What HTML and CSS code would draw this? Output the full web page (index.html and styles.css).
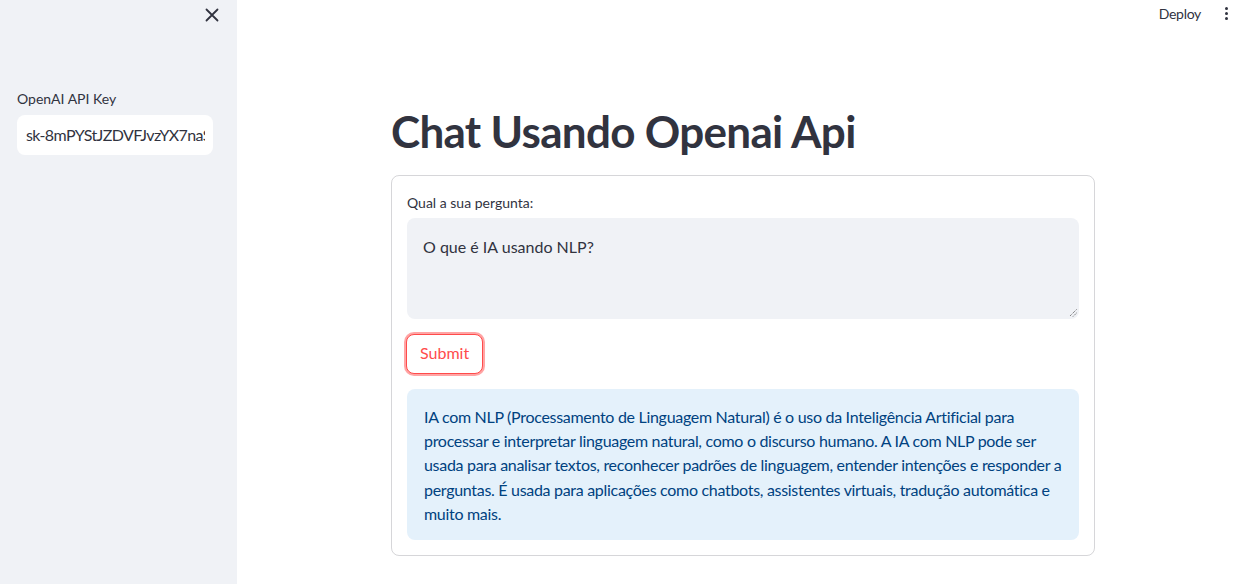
FILE: index.html
```html
<!DOCTYPE html>
<html lang="pt">
<head>
<meta charset="utf-8">
<title>Chat Usando Openai Api</title>
<link rel="stylesheet" href="styles.css">
</head>
<body>
<aside class="sidebar">
  <div class="sidebar-top">
    <button class="close-btn" aria-label="Fechar">
      <svg width="14" height="14" viewBox="0 0 14 14"><path d="M1.5 1.5 L12.5 12.5 M12.5 1.5 L1.5 12.5" stroke="#31333f" stroke-width="1.8" fill="none" stroke-linecap="round"/></svg>
    </button>
  </div>
  <div class="field">
    <label class="label">OpenAI API Key</label>
    <div class="key-input"><span class="key-text">sk-8mPYStJZDVFJvzYX7naS3T</span></div>
  </div>
</aside>
<main class="main">
  <header class="topbar">
    <span class="deploy">Deploy</span>
    <span class="kebab"><i></i><i></i><i></i></span>
  </header>
  <section class="content">
    <h1 class="title">Chat Usando Openai Api</h1>
    <form class="form">
      <label class="label">Qual a sua pergunta:</label>
      <div class="textarea">
        <span>O que é IA usando NLP?</span>
        <svg class="grip" width="9" height="9" viewBox="0 0 9 9"><path d="M8.5 1.5 L1.5 8.5 M8.5 5 L5 8.5" stroke="#555" stroke-width="1" stroke-dasharray="1 1"/></svg>
      </div>
      <div class="btn-row"><button type="button" class="submit">Submit</button></div>
      <div class="info">IA com NLP (Processamento de Linguagem Natural) é o uso da Inteligência Artificial para<br>processar e interpretar linguagem natural, como o discurso humano. A IA com NLP pode ser<br>usada para analisar textos, reconhecer padrões de linguagem, entender intenções e responder a<br>perguntas. É usada para aplicações como chatbots, assistentes virtuais, tradução automática e<br>muito mais.</div>
    </form>
  </section>
</main>
</body>
</html>
```

FILE: styles.css
```css
* { box-sizing: border-box; }
html, body { margin: 0; height: 100%; }
body {
  display: flex;
  font-family: "Lato", "Noto Sans", sans-serif;
  color: #31333f;
  background: #fff;
  overflow: hidden;
}
.sidebar {
  width: 237px;
  flex: none;
  background: #f0f2f6;
  padding: 0 24px 0 17px;
  display: flex;
  flex-direction: column;
}
.sidebar-top {
  display: flex;
  justify-content: flex-end;
  height: 90px;
  padding-top: 8px;
}
.close-btn {
  border: 0;
  background: none;
  padding: 0;
  width: 14px;
  height: 14px;
  margin-right: -6px;
  cursor: pointer;
  display: flex;
}
.field { display: flex; flex-direction: column; }
.label {
  font-size: 14px;
  line-height: 18px;
  margin-bottom: 7px;
  color: #31333f;
}
.key-input {
  height: 40px;
  background: #fff;
  border-radius: 8px;
  padding: 0 8px 0 9px;
  display: flex;
  align-items: center;
}
.key-text {
  display: block;
  width: 100%;
  overflow: hidden;
  white-space: nowrap;
  font-size: 16px;
  line-height: 20px;
  letter-spacing: -0.6px;
}
.main {
  flex: 1;
  display: flex;
  flex-direction: column;
  position: relative;
}
.topbar {
  height: 28px;
  display: flex;
  align-items: center;
  justify-content: flex-end;
  padding-right: 12px;
  gap: 24px;
  padding-bottom: 2px;
}
.deploy { font-size: 14px; letter-spacing: -0.3px; }
.kebab { display: flex; flex-direction: column; gap: 2px; }
.kebab i { width: 3px; height: 3px; border-radius: 50%; background: #31333f; display: block; }
.content {
  width: 704px;
  margin: 0 0 0 154px;
  display: flex;
  flex-direction: column;
}
.title {
  margin: 0;
  padding-top: 77px;
  height: 147px;
  font-size: 44px;
  font-weight: 700;
  line-height: 52px;
  color: #31333f;
  letter-spacing: -0.7px;
}
.form {
  border: 1px solid rgba(49,51,63,0.2);
  border-radius: 8px;
  padding: 18px 15px 15px;
  display: flex;
  flex-direction: column;
}
.form .label { margin-bottom: 6px; font-size: 14px; }
.textarea {
  position: relative;
  height: 101px;
  background: #f0f2f6;
  border-radius: 8px;
  padding: 19px 16px;
  font-size: 16px;
  line-height: 20px;
}
.grip { position: absolute; right: 2px; bottom: 2px; }
.btn-row { padding: 15px 0; display: flex; }
.submit {
  height: 40px;
  padding: 0 13px 3px;
  font-family: inherit;
  font-size: 16px;
  color: #ff4b4b;
  background: #fff;
  border: 1px solid #ff4b4b;
  border-radius: 8px;
  box-shadow: 0 0 0 2px rgba(255,75,75,0.5);
  margin-left: -1px;
}
.info {
  background: #e4f1fb;
  color: #004280;
  border-radius: 8px;
  padding: 16px 16px 14px 17px;
  font-size: 16px;
  line-height: 24.2px;
  letter-spacing: -0.3px;
  white-space: nowrap;
}
```
